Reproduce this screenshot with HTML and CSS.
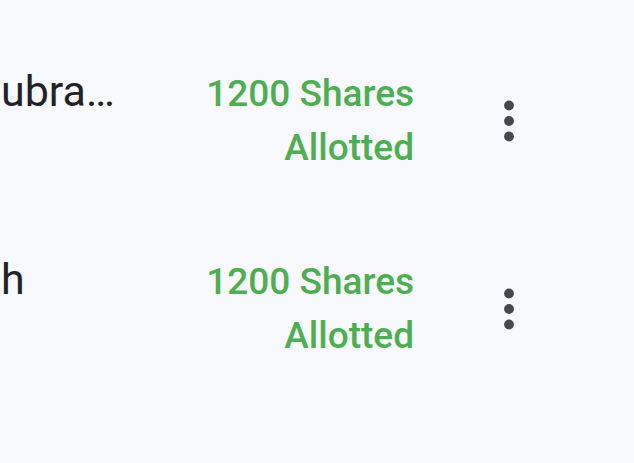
FILE: index.html
```html
<!DOCTYPE html>
<html>
<head>
<meta charset="utf-8">
<link rel="stylesheet" href="styles.css">
</head>
<body>
<div class="list">
  <div class="row">
    <div class="name">ubra…</div>
    <div class="status">1200 Shares<br>Allotted</div>
    <button class="more" aria-label="More">
      <svg viewBox="0 0 24 24" width="62" height="62"><circle cx="12" cy="6" r="1.9"/><circle cx="12" cy="12" r="1.9"/><circle cx="12" cy="18" r="1.9"/></svg>
    </button>
  </div>
  <div class="row">
    <div class="name">h</div>
    <div class="status">1200 Shares<br>Allotted</div>
    <button class="more" aria-label="More">
      <svg viewBox="0 0 24 24" width="62" height="62"><circle cx="12" cy="6" r="1.9"/><circle cx="12" cy="12" r="1.9"/><circle cx="12" cy="18" r="1.9"/></svg>
    </button>
  </div>
</div>
</body>
</html>
```
FILE: styles.css
```css
html, body {
  margin: 0;
  padding: 0;
  background: #f8f9fd;
  font-family: Roboto, "Liberation Sans", sans-serif;
}
.list {
  padding-top: 27px;
  padding-right: 94px;
}
.row {
  display: flex;
  align-items: baseline;
  padding: 40px 0;
}
.name {
  flex: 1;
  min-width: 0;
  font-size: 43px;
  line-height: 48px;
  color: #212225;
  white-space: nowrap;
  padding-left: 1px;
}
.status {
  font-size: 37px;
  line-height: 54px;
  font-weight: 500;
  color: #4caf50;
  text-align: right;
}
.more {
  align-self: center;
  margin-left: 64px;
  padding: 0;
  border: 0;
  background: none;
  width: 62px;
  height: 62px;
  display: flex;
}
.more svg {
  fill: #45484d;
}
```
